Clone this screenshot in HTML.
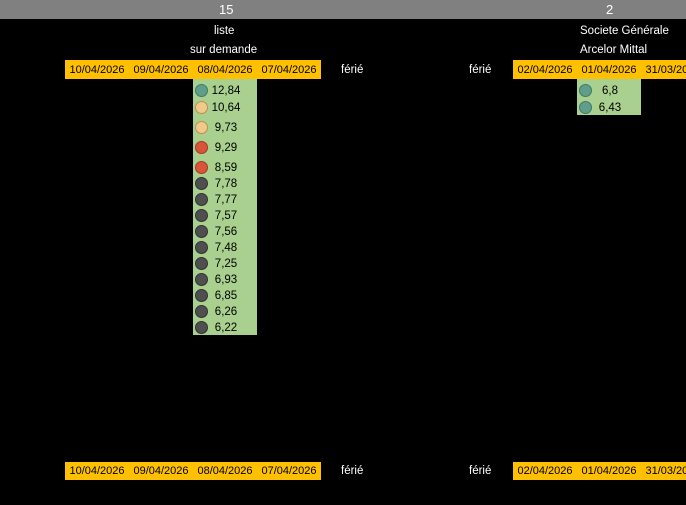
<!DOCTYPE html>
<html><head><meta charset="utf-8"><style>
body{margin:0;width:686px;height:505px;background:#000;position:relative;overflow:hidden;font-family:"Liberation Sans",sans-serif;font-size:11.5px}
.a{position:absolute;white-space:nowrap}
.top{left:0;top:0;width:686px;height:19px;background:#808080}
.w{color:#fff}
.or{background:#ffc000;height:19px;color:#000;line-height:20px;font-size:11px}
.or span{display:inline-block;width:64px;text-align:center}
.g{background:#a9d08e}
.r{position:absolute;left:0;width:64px;height:16px}
.c{position:absolute;left:2px;top:1px;width:11px;height:11px;border-radius:50%;border:1px solid}
.t{position:absolute;left:14px;width:38px;text-align:center;line-height:16px;color:#000}
.te{background:#5f9e8a;border-color:#3f7a68}
.ta{background:#f2c98c;border-color:#b8924f}
.re{background:#d9553a;border-color:#a33a22}
.dk{background:#4f4f4f;border-color:#333}
</style></head><body>
<div class="a top"></div>
<div class="a w" style="left:219px;top:2px;font-size:13px">15</div>
<div class="a w" style="left:606px;top:2px;font-size:13px">2</div>
<div class="a w" style="left:214px;top:25px">liste</div>
<div class="a w" style="left:190px;top:44px">sur demande</div>
<div class="a w" style="left:580px;top:25px">Societe Générale</div>
<div class="a w" style="left:580px;top:44px">Arcelor Mittal</div>

<div class="a or" style="left:65px;top:60px;width:256px"><span>10/04/2026</span><span>09/04/2026</span><span>08/04/2026</span><span>07/04/2026</span></div>
<div class="a w" style="left:341px;top:64px">férié</div>
<div class="a w" style="left:469px;top:64px">férié</div>
<div class="a or" style="left:513px;top:60px;width:173px"><span>02/04/2026</span><span>01/04/2026</span><span>31/03/2026</span></div>

<div class="a g" style="left:193px;top:79px;width:64px;height:256px">
<div class="r" style="top:4px"><div class="c te"></div><div class="t">12,84</div></div>
<div class="r" style="top:21px"><div class="c ta"></div><div class="t">10,64</div></div>
<div class="r" style="top:41px"><div class="c ta"></div><div class="t">9,73</div></div>
<div class="r" style="top:61px"><div class="c re"></div><div class="t">9,29</div></div>
<div class="r" style="top:81px"><div class="c re"></div><div class="t">8,59</div></div>
<div class="r" style="top:97px"><div class="c dk"></div><div class="t">7,78</div></div>
<div class="r" style="top:113px"><div class="c dk"></div><div class="t">7,77</div></div>
<div class="r" style="top:129px"><div class="c dk"></div><div class="t">7,57</div></div>
<div class="r" style="top:145px"><div class="c dk"></div><div class="t">7,56</div></div>
<div class="r" style="top:161px"><div class="c dk"></div><div class="t">7,48</div></div>
<div class="r" style="top:177px"><div class="c dk"></div><div class="t">7,25</div></div>
<div class="r" style="top:193px"><div class="c dk"></div><div class="t">6,93</div></div>
<div class="r" style="top:209px"><div class="c dk"></div><div class="t">6,85</div></div>
<div class="r" style="top:225px"><div class="c dk"></div><div class="t">6,26</div></div>
<div class="r" style="top:241px"><div class="c dk"></div><div class="t">6,22</div></div>
</div>

<div class="a g" style="left:577px;top:79px;width:64px;height:36px">
<div class="r" style="top:4px"><div class="c te"></div><div class="t">6,8</div></div>
<div class="r" style="top:21px"><div class="c te"></div><div class="t">6,43</div></div>
</div>

<div class="a or" style="left:65px;top:462px;width:256px;height:18px;line-height:19px"><span>10/04/2026</span><span>09/04/2026</span><span>08/04/2026</span><span>07/04/2026</span></div>
<div class="a w" style="left:341px;top:465px">férié</div>
<div class="a w" style="left:469px;top:465px">férié</div>
<div class="a or" style="left:513px;top:462px;width:173px;height:18px;line-height:19px"><span>02/04/2026</span><span>01/04/2026</span><span>31/03/2026</span></div>
</body></html>
